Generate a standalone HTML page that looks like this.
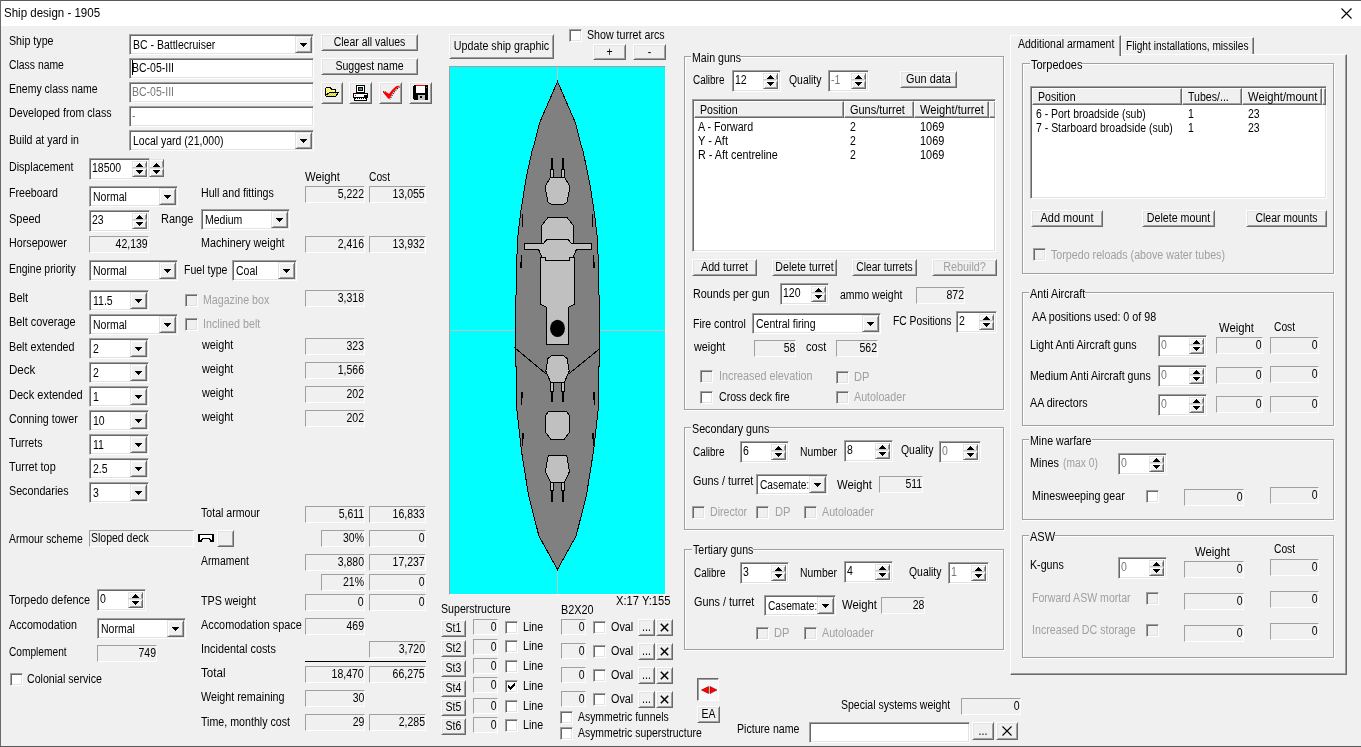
<!DOCTYPE html>
<html><head><meta charset="utf-8"><title>Ship design - 1905</title><style>
html,body{margin:0;padding:0}
body{width:1361px;height:747px;overflow:hidden;background:#f0f0f0;font-family:"Liberation Sans",sans-serif;font-size:12px;line-height:14px;color:#000;position:relative}
div,span{box-sizing:border-box}
#w{position:absolute;left:0;top:0;width:1361px;height:747px;will-change:transform}
.a{position:absolute}
.t{position:absolute;white-space:nowrap;transform:scaleX(.875);transform-origin:0 0;height:14px}
.tr{position:absolute;white-space:nowrap;transform:scaleX(.875);transform-origin:100% 0;height:14px;text-align:right}
.tc{position:absolute;white-space:nowrap;transform:scaleX(.875);transform-origin:50% 0;height:14px;text-align:center;left:-30px;right:-30px}
.g{color:#a0a0a0}
.g2{color:#787878}
.ed{position:absolute;background:#fff;border:1px solid;border-color:#a0a0a0 #fff #fff #a0a0a0;box-shadow:inset 1px 1px 0 #696969,inset -1px -1px 0 #e3e3e3;overflow:hidden}
.fd{position:absolute;border:1px solid;border-color:#a0a0a0 #fff #fff #a0a0a0;overflow:hidden}
.bt{position:absolute;background:#f0f0f0;border:1px solid;border-color:#fff #696969 #696969 #fff;box-shadow:inset 1px 1px 0 #e3e3e3,inset -1px -1px 0 #a0a0a0}
.sb{position:absolute;background:#f0f0f0;border:1px solid;border-color:#e3e3e3 #696969 #696969 #e3e3e3;box-shadow:inset 1px 1px 0 #fff,inset -1px -1px 0 #a0a0a0}
.sb.su{border-bottom-color:#c8c8c8;box-shadow:inset 1px 1px 0 #fff,inset -1px 0 0 #a0a0a0}
.gb{position:absolute;border:1px solid #a0a0a0;box-shadow:1px 1px 0 #fff,inset 1px 1px 0 #fff}
.gt{position:absolute;background:#f0f0f0;height:14px}
.cb{position:absolute;width:13px;height:13px;background:#fff;border:1px solid;border-color:#a0a0a0 #fff #fff #a0a0a0;box-shadow:inset 1px 1px 0 #696969,inset -1px -1px 0 #e3e3e3}
.cb.d{background:#f0f0f0}
.hc{position:absolute;background:#f0f0f0;border:1px solid;border-color:#fff #696969 #696969 #fff;box-shadow:inset -1px -1px 0 #a0a0a0;height:17px;top:0}
svg{position:absolute;overflow:visible}
</style></head><body><div id="w">
<div class="a" style="left:0;top:0;width:1361px;height:26px;background:#fff"></div>
<div class="a" style="left:0;top:0;width:1361px;height:1px;background:#5a5a5a"></div>
<div class="a" style="left:0;top:0;width:1px;height:747px;background:#6a6a6a"></div>
<div class="a" style="left:0;top:746px;width:1361px;height:1px;background:#5a5a5a"></div>
<div class="t" style="left:4px;top:6px;transform:scaleX(.96)">Ship design - 1905</div>
<svg width="11" height="11" style="left:1341px;top:8px"><path d="M0.5 0.5L10.5 10.5M10.5 0.5L0.5 10.5" stroke="#000" stroke-width="1.1" fill="none"/></svg>
<div class="t " style="left:9px;top:34px;transform:scaleX(0.8894)">Ship type</div>
<div class="t " style="left:9px;top:58px;transform:scaleX(0.8665)">Class name</div>
<div class="t " style="left:9px;top:82px;transform:scaleX(0.875)">Enemy class name</div>
<div class="t " style="left:9px;top:106px;transform:scaleX(0.8892)">Developed from class</div>
<div class="t " style="left:9px;top:133px;transform:scaleX(0.8806)">Build at yard in</div>
<div class="ed" style="left:129px;top:34px;width:185px;height:21px"><div class="t " style="left:3px;top:3px;width:184.0px;overflow:hidden">BC - Battlecruiser</div><div class="sb" style="left:165px;top:1px;width:17px;height:17px"><svg width="7" height="4" style="left:4px;top:6px" shape-rendering="crispEdges"><path d="M0 0h7v1h-7zM1 1h5v1h-5zM2 2h3v1h-3zM3 3h1v1h-1z" fill="#000"/></svg></div></div>
<div class="ed" style="left:129px;top:58px;width:185px;height:21px"><div class="a" style="left:2px;top:1px;width:1px;height:15px;background:#000"></div><div class="t " style="left:2px;top:2px">BC-05-III</div></div>
<div class="ed" style="left:129px;top:82px;width:185px;height:21px"><div class="t g2" style="left:2px;top:2px">BC-05-III</div></div>
<div class="ed" style="left:129px;top:106px;width:185px;height:21px"><div class="t g2" style="left:2px;top:2px">-</div></div>
<div class="ed" style="left:129px;top:130px;width:185px;height:21px"><div class="t " style="left:3px;top:3px;width:184.0px;overflow:hidden">Local yard (21,000)</div><div class="sb" style="left:165px;top:1px;width:17px;height:17px"><svg width="7" height="4" style="left:4px;top:6px" shape-rendering="crispEdges"><path d="M0 0h7v1h-7zM1 1h5v1h-5zM2 2h3v1h-3zM3 3h1v1h-1z" fill="#000"/></svg></div></div>
<div class="bt" style="left:321px;top:34px;width:97px;height:17px"><div class="tc " style="top:0px;transform:scaleX(0.8716)">Clear all values</div></div>
<div class="bt" style="left:321px;top:58px;width:97px;height:17px"><div class="tc " style="top:0px;transform:scaleX(0.8813)">Suggest name</div></div>
<div class="bt" style="left:321px;top:82px;width:22px;height:22px"><svg width="14" height="10" style="left:3px;top:4px" shape-rendering="crispEdges"><defs><pattern id="dy" width="2" height="2" patternUnits="userSpaceOnUse"><rect width="2" height="2" fill="#ffff00"/><rect width="1" height="1" fill="#ffffff"/><rect x="1" y="1" width="1" height="1" fill="#ffffff"/></pattern><pattern id="dg" width="2" height="2" patternUnits="userSpaceOnUse"><rect width="2" height="2" fill="#ffff00"/><rect width="1" height="1" fill="#c0c0c0"/><rect x="1" y="1" width="1" height="1" fill="#c0c0c0"/></pattern></defs><polygon points="0.5,8.5 0.5,1.5 1.5,0.5 5.5,0.5 6.5,2.5 10.5,2.5 10.5,5.5 4.5,5.5 1.5,8.5" fill="url(#dy)" stroke="#000" stroke-width="1"/><polygon points="4.5,5.5 13.5,5.5 10.5,9.5 1.5,9.5 0.5,8.5" fill="url(#dg)" stroke="#000" stroke-width="1"/></svg></div>
<div class="bt" style="left:349px;top:82px;width:23px;height:22px"><svg width="15" height="16" style="left:3px;top:2px" shape-rendering="crispEdges"><rect x="3.5" y="0.5" width="8" height="7" fill="#fff" stroke="#000"/><rect x="5.5" y="2.5" width="4" height="3" fill="#00c000" stroke="#000"/><rect x="6" y="3" width="1" height="1" fill="#ff00ff"/><rect x="8" y="3" width="1" height="1" fill="#ff00ff"/><rect x="8" y="4" width="1" height="1" fill="#00ffff"/><rect x="0.5" y="8.5" width="14" height="4" fill="#fff" stroke="#000"/><rect x="0" y="8" width="15" height="1" fill="#000"/><rect x="2" y="10" width="1" height="1" fill="#f00"/><rect x="11.5" y="10.5" width="3" height="1" fill="#fff" stroke="#000"/><rect x="1" y="13" width="13" height="3" fill="#fff"/><path d="M1 13h2M4 13h1M6 13h1M8 13h1M10 13h1M12 13h2M1 14h1M13 14h1" stroke="#000" transform="translate(0,.5)"/><rect x="1" y="15" width="13" height="1" fill="#000"/></svg></div>
<div class="bt" style="left:379px;top:82px;width:23px;height:22px"><svg width="22" height="20" style="left:-1px;top:-1px"><path d="M20.6 4.9Q14.6 9 11.1 17.2" stroke="#000" stroke-width="1.1" stroke-dasharray="1.1 1.1" fill="none"/><path d="M4.2 9.6h2.6" stroke="#000" stroke-width="1" stroke-dasharray="1 1" fill="none"/><path d="M4.2 10H6.8L10.2 11.8Q12.6 7.6 17 4.2L20.2 3.6V4.5Q14 8.6 10.6 16.8H9.4L4.2 10.8z" fill="#f00"/></svg></div>
<div class="bt" style="left:409px;top:82px;width:23px;height:22px"><svg width="15" height="15" style="left:3px;top:2px" shape-rendering="crispEdges"><path d="M1 0h13l1 1v13l-1 1h-13l-1-1v-13z" fill="#000"/><rect x="3" y="0" width="9" height="8" fill="#fff"/><rect x="3" y="0" width="9" height="1" fill="#f00"/><rect x="5" y="10" width="7" height="5" fill="#c0c0c0"/><rect x="7" y="11" width="2" height="2" fill="#000"/><rect x="13" y="2" width="1" height="1" fill="#808080"/></svg></div>
<div class="t " style="left:9px;top:160px;transform:scaleX(0.8859)">Displacement</div>
<div class="ed" style="left:89px;top:158px;width:61px;height:22px"><div class="t " style="left:2px;top:2px">18500</div><div class="sb su" style="left:42px;top:2px;width:15px;height:7px"><svg width="7" height="4" style="left:3px;top:1px" shape-rendering="crispEdges"><path d="M3 0h1v1h-1zM2 1h3v1h-3zM1 2h5v1h-5zM0 3h7v1h-7z" fill="#000"/></svg></div><div class="sb" style="left:42px;top:9px;width:15px;height:9px"><svg width="7" height="4" style="left:3px;top:1px" shape-rendering="crispEdges"><path d="M0 0h7v1h-7zM1 1h5v1h-5zM2 2h3v1h-3zM3 3h1v1h-1z" fill="#000"/></svg></div></div>
<div class="a" style="left:149px;top:159px;width:15px;height:18px"><div class="sb su" style="left:0px;top:0px;width:15px;height:9px"><svg width="7" height="4" style="left:3px;top:3px" shape-rendering="crispEdges"><path d="M3 0h1v1h-1zM2 1h3v1h-3zM1 2h5v1h-5zM0 3h7v1h-7z" fill="#000"/></svg></div><div class="sb" style="left:0px;top:9px;width:15px;height:9px"><svg width="7" height="4" style="left:3px;top:1px" shape-rendering="crispEdges"><path d="M0 0h7v1h-7zM1 1h5v1h-5zM2 2h3v1h-3zM3 3h1v1h-1z" fill="#000"/></svg></div></div>
<div class="t " style="left:305px;top:170px;transform:scaleX(0.9426)">Weight</div>
<div class="t " style="left:369px;top:170px;transform:scaleX(0.8552)">Cost</div>
<div class="t " style="left:9px;top:186px;transform:scaleX(0.8851)">Freeboard</div>
<div class="ed" style="left:89px;top:186px;width:89px;height:21px"><div class="t " style="left:3px;top:3px;width:74.3px;overflow:hidden">Normal</div><div class="sb" style="left:69px;top:1px;width:17px;height:17px"><svg width="7" height="4" style="left:4px;top:6px" shape-rendering="crispEdges"><path d="M0 0h7v1h-7zM1 1h5v1h-5zM2 2h3v1h-3zM3 3h1v1h-1z" fill="#000"/></svg></div></div>
<div class="t " style="left:201px;top:186px;transform:scaleX(0.8874)">Hull and fittings</div>
<div class="fd" style="left:305px;top:186px;width:60px;height:17px"><div class="tr " style="right:0px;top:0px">5,222</div></div>
<div class="fd" style="left:369px;top:186px;width:57px;height:17px"><div class="tr " style="right:0px;top:0px">13,055</div></div>
<div class="t " style="left:9px;top:212px;transform:scaleX(0.9136)">Speed</div>
<div class="ed" style="left:89px;top:210px;width:61px;height:22px"><div class="t " style="left:2px;top:2px">23</div><div class="sb su" style="left:42px;top:2px;width:15px;height:7px"><svg width="7" height="4" style="left:3px;top:1px" shape-rendering="crispEdges"><path d="M3 0h1v1h-1zM2 1h3v1h-3zM1 2h5v1h-5zM0 3h7v1h-7z" fill="#000"/></svg></div><div class="sb" style="left:42px;top:9px;width:15px;height:9px"><svg width="7" height="4" style="left:3px;top:1px" shape-rendering="crispEdges"><path d="M0 0h7v1h-7zM1 1h5v1h-5zM2 2h3v1h-3zM3 3h1v1h-1z" fill="#000"/></svg></div></div>
<div class="t " style="left:161px;top:212px;transform:scaleX(0.9163)">Range</div>
<div class="ed" style="left:201px;top:209px;width:89px;height:21px"><div class="t " style="left:3px;top:3px;width:74.3px;overflow:hidden">Medium</div><div class="sb" style="left:69px;top:1px;width:17px;height:17px"><svg width="7" height="4" style="left:4px;top:6px" shape-rendering="crispEdges"><path d="M0 0h7v1h-7zM1 1h5v1h-5zM2 2h3v1h-3zM3 3h1v1h-1z" fill="#000"/></svg></div></div>
<div class="t " style="left:9px;top:236px;transform:scaleX(0.8935)">Horsepower</div>
<div class="fd" style="left:89px;top:236px;width:60px;height:17px"><div class="tr " style="right:0px;top:0px">42,139</div></div>
<div class="t " style="left:201px;top:236px;transform:scaleX(0.8953)">Machinery weight</div>
<div class="fd" style="left:305px;top:236px;width:60px;height:17px"><div class="tr " style="right:0px;top:0px">2,416</div></div>
<div class="fd" style="left:369px;top:236px;width:57px;height:17px"><div class="tr " style="right:0px;top:0px">13,932</div></div>
<div class="t " style="left:9px;top:262px;transform:scaleX(0.8683)">Engine priority</div>
<div class="ed" style="left:89px;top:260px;width:89px;height:21px"><div class="t " style="left:3px;top:3px;width:74.3px;overflow:hidden">Normal</div><div class="sb" style="left:69px;top:1px;width:17px;height:17px"><svg width="7" height="4" style="left:4px;top:6px" shape-rendering="crispEdges"><path d="M0 0h7v1h-7zM1 1h5v1h-5zM2 2h3v1h-3zM3 3h1v1h-1z" fill="#000"/></svg></div></div>
<div class="t " style="left:184px;top:263px;transform:scaleX(0.8793)">Fuel type</div>
<div class="ed" style="left:232px;top:260px;width:65px;height:21px"><div class="t " style="left:3px;top:3px;width:46.9px;overflow:hidden">Coal</div><div class="sb" style="left:45px;top:1px;width:17px;height:17px"><svg width="7" height="4" style="left:4px;top:6px" shape-rendering="crispEdges"><path d="M0 0h7v1h-7zM1 1h5v1h-5zM2 2h3v1h-3zM3 3h1v1h-1z" fill="#000"/></svg></div></div>
<div class="t " style="left:9px;top:291px;transform:scaleX(0.9237)">Belt</div>
<div class="ed" style="left:89px;top:290px;width:60px;height:21px"><div class="t " style="left:3px;top:3px;width:41.1px;overflow:hidden">11.5</div><div class="sb" style="left:40px;top:1px;width:17px;height:17px"><svg width="7" height="4" style="left:4px;top:6px" shape-rendering="crispEdges"><path d="M0 0h7v1h-7zM1 1h5v1h-5zM2 2h3v1h-3zM3 3h1v1h-1z" fill="#000"/></svg></div></div>
<div class="t " style="left:9px;top:315px;transform:scaleX(0.9076)">Belt coverage</div>
<div class="ed" style="left:89px;top:314px;width:89px;height:21px"><div class="t " style="left:3px;top:3px;width:74.3px;overflow:hidden">Normal</div><div class="sb" style="left:69px;top:1px;width:17px;height:17px"><svg width="7" height="4" style="left:4px;top:6px" shape-rendering="crispEdges"><path d="M0 0h7v1h-7zM1 1h5v1h-5zM2 2h3v1h-3zM3 3h1v1h-1z" fill="#000"/></svg></div></div>
<div class="t " style="left:9px;top:340px;transform:scaleX(0.8925)">Belt extended</div>
<div class="ed" style="left:89px;top:338px;width:60px;height:21px"><div class="t " style="left:3px;top:3px;width:41.1px;overflow:hidden">2</div><div class="sb" style="left:40px;top:1px;width:17px;height:17px"><svg width="7" height="4" style="left:4px;top:6px" shape-rendering="crispEdges"><path d="M0 0h7v1h-7zM1 1h5v1h-5zM2 2h3v1h-3zM3 3h1v1h-1z" fill="#000"/></svg></div></div>
<div class="t " style="left:9px;top:363px;transform:scaleX(0.9657)">Deck</div>
<div class="ed" style="left:89px;top:362px;width:60px;height:21px"><div class="t " style="left:3px;top:3px;width:41.1px;overflow:hidden">2</div><div class="sb" style="left:40px;top:1px;width:17px;height:17px"><svg width="7" height="4" style="left:4px;top:6px" shape-rendering="crispEdges"><path d="M0 0h7v1h-7zM1 1h5v1h-5zM2 2h3v1h-3zM3 3h1v1h-1z" fill="#000"/></svg></div></div>
<div class="t " style="left:9px;top:388px;transform:scaleX(0.9207)">Deck extended</div>
<div class="ed" style="left:89px;top:386px;width:60px;height:21px"><div class="t " style="left:3px;top:3px;width:41.1px;overflow:hidden">1</div><div class="sb" style="left:40px;top:1px;width:17px;height:17px"><svg width="7" height="4" style="left:4px;top:6px" shape-rendering="crispEdges"><path d="M0 0h7v1h-7zM1 1h5v1h-5zM2 2h3v1h-3zM3 3h1v1h-1z" fill="#000"/></svg></div></div>
<div class="t " style="left:9px;top:412px;transform:scaleX(0.8892)">Conning tower</div>
<div class="ed" style="left:89px;top:410px;width:60px;height:21px"><div class="t " style="left:3px;top:3px;width:41.1px;overflow:hidden">10</div><div class="sb" style="left:40px;top:1px;width:17px;height:17px"><svg width="7" height="4" style="left:4px;top:6px" shape-rendering="crispEdges"><path d="M0 0h7v1h-7zM1 1h5v1h-5zM2 2h3v1h-3zM3 3h1v1h-1z" fill="#000"/></svg></div></div>
<div class="t " style="left:9px;top:436px;transform:scaleX(0.8919)">Turrets</div>
<div class="ed" style="left:89px;top:434px;width:60px;height:21px"><div class="t " style="left:3px;top:3px;width:41.1px;overflow:hidden">11</div><div class="sb" style="left:40px;top:1px;width:17px;height:17px"><svg width="7" height="4" style="left:4px;top:6px" shape-rendering="crispEdges"><path d="M0 0h7v1h-7zM1 1h5v1h-5zM2 2h3v1h-3zM3 3h1v1h-1z" fill="#000"/></svg></div></div>
<div class="t " style="left:9px;top:460px;transform:scaleX(0.9055)">Turret top</div>
<div class="ed" style="left:89px;top:458px;width:60px;height:21px"><div class="t " style="left:3px;top:3px;width:41.1px;overflow:hidden">2.5</div><div class="sb" style="left:40px;top:1px;width:17px;height:17px"><svg width="7" height="4" style="left:4px;top:6px" shape-rendering="crispEdges"><path d="M0 0h7v1h-7zM1 1h5v1h-5zM2 2h3v1h-3zM3 3h1v1h-1z" fill="#000"/></svg></div></div>
<div class="t " style="left:9px;top:484px;transform:scaleX(0.8934)">Secondaries</div>
<div class="ed" style="left:89px;top:482px;width:60px;height:21px"><div class="t " style="left:3px;top:3px;width:41.1px;overflow:hidden">3</div><div class="sb" style="left:40px;top:1px;width:17px;height:17px"><svg width="7" height="4" style="left:4px;top:6px" shape-rendering="crispEdges"><path d="M0 0h7v1h-7zM1 1h5v1h-5zM2 2h3v1h-3zM3 3h1v1h-1z" fill="#000"/></svg></div></div>
<div class="cb d" style="left:185px;top:294px"></div>
<div class="t g" style="left:203px;top:293px;transform:scaleX(0.8861)">Magazine box</div>
<div class="cb d" style="left:185px;top:318px"></div>
<div class="t g" style="left:203px;top:317px;transform:scaleX(0.8947)">Inclined belt</div>
<div class="fd" style="left:305px;top:290px;width:60px;height:17px"><div class="tr " style="right:0px;top:0px">3,318</div></div>
<div class="t " style="left:202px;top:338px;transform:scaleX(0.9024)">weight</div>
<div class="fd" style="left:305px;top:338px;width:60px;height:17px"><div class="tr " style="right:0px;top:0px">323</div></div>
<div class="t " style="left:202px;top:362px;transform:scaleX(0.9024)">weight</div>
<div class="fd" style="left:305px;top:362px;width:60px;height:17px"><div class="tr " style="right:0px;top:0px">1,566</div></div>
<div class="t " style="left:202px;top:386px;transform:scaleX(0.9024)">weight</div>
<div class="fd" style="left:305px;top:386px;width:60px;height:17px"><div class="tr " style="right:0px;top:0px">202</div></div>
<div class="t " style="left:202px;top:410px;transform:scaleX(0.9024)">weight</div>
<div class="fd" style="left:305px;top:410px;width:60px;height:17px"><div class="tr " style="right:0px;top:0px">202</div></div>
<div class="t " style="left:201px;top:506px;transform:scaleX(0.8832)">Total armour</div>
<div class="fd" style="left:305px;top:506px;width:60px;height:17px"><div class="tr " style="right:0px;top:0px">5,611</div></div>
<div class="fd" style="left:369px;top:506px;width:57px;height:17px"><div class="tr " style="right:0px;top:0px">16,833</div></div>
<div class="t " style="left:9px;top:532px;transform:scaleX(0.8702)">Armour scheme</div>
<div class="fd" style="left:89px;top:530px;width:105px;height:17px"><div class="t " style="left:1px;top:0px">Sloped deck</div></div>
<svg width="16" height="8" style="left:198px;top:534px" shape-rendering="crispEdges"><rect x="0" y="0" width="16" height="1" fill="#000"/><rect x="0" y="1" width="2" height="1" fill="#000"/><rect x="2" y="1" width="12" height="1" fill="#fff"/><rect x="14" y="1" width="2" height="1" fill="#000"/><rect x="0" y="2" width="2" height="1" fill="#000"/><rect x="2" y="2" width="12" height="1" fill="#fff"/><rect x="14" y="2" width="2" height="1" fill="#000"/><rect x="0" y="3" width="2" height="1" fill="#000"/><rect x="2" y="3" width="12" height="1" fill="#fff"/><rect x="14" y="3" width="2" height="1" fill="#000"/><rect x="0" y="4" width="2" height="1" fill="#000"/><rect x="2" y="4" width="2" height="1" fill="#fff"/><rect x="4" y="4" width="8" height="1" fill="#000"/><rect x="12" y="4" width="2" height="1" fill="#fff"/><rect x="14" y="4" width="2" height="1" fill="#000"/><rect x="0" y="5" width="2" height="1" fill="#000"/><rect x="2" y="5" width="1" height="1" fill="#fff"/><rect x="3" y="5" width="2" height="1" fill="#000"/><rect x="11" y="5" width="2" height="1" fill="#000"/><rect x="13" y="5" width="1" height="1" fill="#fff"/><rect x="14" y="5" width="2" height="1" fill="#000"/><rect x="0" y="6" width="4" height="1" fill="#000"/><rect x="12" y="6" width="4" height="1" fill="#000"/><rect x="0" y="7" width="4" height="1" fill="#000"/><rect x="12" y="7" width="4" height="1" fill="#000"/></svg>
<div class="bt" style="left:217px;top:530px;width:17px;height:17px"><div class="tc " style="top:0px"></div></div>
<div class="fd" style="left:321px;top:530px;width:44px;height:17px"><div class="tr " style="right:0px;top:0px">30%</div></div>
<div class="fd" style="left:369px;top:530px;width:57px;height:17px"><div class="tr " style="right:0px;top:0px">0</div></div>
<div class="t " style="left:201px;top:554px;transform:scaleX(0.8636)">Armament</div>
<div class="fd" style="left:305px;top:554px;width:60px;height:17px"><div class="tr " style="right:0px;top:0px">3,880</div></div>
<div class="fd" style="left:369px;top:554px;width:57px;height:17px"><div class="tr " style="right:0px;top:0px">17,237</div></div>
<div class="fd" style="left:321px;top:574px;width:44px;height:17px"><div class="tr " style="right:0px;top:0px">21%</div></div>
<div class="fd" style="left:369px;top:574px;width:57px;height:17px"><div class="tr " style="right:0px;top:0px">0</div></div>
<div class="t " style="left:9px;top:593px;transform:scaleX(0.906)">Torpedo defence</div>
<div class="ed" style="left:97px;top:589px;width:49px;height:22px"><div class="t " style="left:2px;top:2px">0</div><div class="sb su" style="left:30px;top:2px;width:15px;height:7px"><svg width="7" height="4" style="left:3px;top:1px" shape-rendering="crispEdges"><path d="M3 0h1v1h-1zM2 1h3v1h-3zM1 2h5v1h-5zM0 3h7v1h-7z" fill="#000"/></svg></div><div class="sb" style="left:30px;top:9px;width:15px;height:9px"><svg width="7" height="4" style="left:3px;top:1px" shape-rendering="crispEdges"><path d="M0 0h7v1h-7zM1 1h5v1h-5zM2 2h3v1h-3zM3 3h1v1h-1z" fill="#000"/></svg></div></div>
<div class="t " style="left:201px;top:594px;transform:scaleX(0.8947)">TPS weight</div>
<div class="fd" style="left:305px;top:594px;width:60px;height:17px"><div class="tr " style="right:0px;top:0px">0</div></div>
<div class="fd" style="left:369px;top:594px;width:57px;height:17px"><div class="tr " style="right:0px;top:0px">0</div></div>
<div class="t " style="left:9px;top:618px;transform:scaleX(0.8942)">Accomodation</div>
<div class="ed" style="left:97px;top:618px;width:89px;height:21px"><div class="t " style="left:3px;top:3px;width:74.3px;overflow:hidden">Normal</div><div class="sb" style="left:69px;top:1px;width:17px;height:17px"><svg width="7" height="4" style="left:4px;top:6px" shape-rendering="crispEdges"><path d="M0 0h7v1h-7zM1 1h5v1h-5zM2 2h3v1h-3zM3 3h1v1h-1z" fill="#000"/></svg></div></div>
<div class="t " style="left:201px;top:618px;transform:scaleX(0.9049)">Accomodation space</div>
<div class="fd" style="left:305px;top:618px;width:60px;height:17px"><div class="tr " style="right:0px;top:0px">469</div></div>
<div class="t " style="left:9px;top:645px;transform:scaleX(0.8467)">Complement</div>
<div class="fd" style="left:97px;top:645px;width:60px;height:17px"><div class="tr " style="right:0px;top:0px">749</div></div>
<div class="t " style="left:201px;top:642px;transform:scaleX(0.9044)">Incidental costs</div>
<div class="fd" style="left:369px;top:641px;width:57px;height:17px"><div class="tr " style="right:0px;top:0px">3,720</div></div>
<div class="a" style="left:305px;top:661px;width:121px;height:1px;background:#000"></div>
<div class="t " style="left:201px;top:666px;transform:scaleX(0.97)">Total</div>
<div class="fd" style="left:305px;top:666px;width:60px;height:17px"><div class="tr " style="right:0px;top:0px">18,470</div></div>
<div class="fd" style="left:369px;top:666px;width:57px;height:17px"><div class="tr " style="right:0px;top:0px">66,275</div></div>
<div class="cb" style="left:10px;top:673px"></div>
<div class="t " style="left:27px;top:672px;transform:scaleX(0.8843)">Colonial service</div>
<div class="t " style="left:201px;top:690px;transform:scaleX(0.8963)">Weight remaining</div>
<div class="fd" style="left:305px;top:690px;width:60px;height:17px"><div class="tr " style="right:0px;top:0px">30</div></div>
<div class="t " style="left:201px;top:715px;transform:scaleX(0.8878)">Time, monthly cost</div>
<div class="fd" style="left:305px;top:714px;width:60px;height:17px"><div class="tr " style="right:0px;top:0px">29</div></div>
<div class="fd" style="left:369px;top:714px;width:57px;height:17px"><div class="tr " style="right:0px;top:0px">2,285</div></div>
<div class="bt" style="left:449px;top:34px;width:105px;height:25px"><div class="tc " style="top:4px;transform:scaleX(0.8929)">Update ship graphic</div></div>
<div class="cb" style="left:569px;top:29px"></div>
<div class="t " style="left:587px;top:28px;transform:scaleX(0.8882)">Show turret arcs</div>
<div class="bt" style="left:593px;top:44px;width:33px;height:16px"><div class="tc " style="top:0px">+</div></div>
<div class="bt" style="left:633px;top:44px;width:33px;height:16px"><div class="tc " style="top:0px">-</div></div>
<div class="a" style="left:449px;top:66px;width:217px;height:529px;border:1px solid;border-color:#a0a0a0 #fff #fff #a0a0a0"></div><svg width="215" height="527" style="left:450px;top:67px;background:#00ffff;overflow:hidden" shape-rendering="crispEdges"><rect x="107" y="0" width="1" height="527" fill="#c0c0c0"/><rect x="0" y="263" width="215" height="1" fill="#c0c0c0"/><polygon points="107.5,14.5 125.5,56.0 130.7,77.0 132.7,83.0 136.9,102.0 139.7,116.0 144.5,146.6 147.9,176.0 147.9,187.0 148.8,187.5 148.8,228.0 149.7,228.5 149.7,298.7 148.8,299.5 148.7,338.0 143.7,383.0 136.5,428.0 126.1,469.0 107.5,502.5 88.9,469.0 78.5,428.0 71.3,383.0 66.3,338.0 66.2,299.5 65.3,298.7 65.3,228.5 66.2,228.0 66.2,187.5 67.1,187.0 67.1,176.0 70.5,146.6 75.3,116.0 78.1,102.0 82.3,83.0 84.3,77.0 89.5,56.0" fill="#808080" stroke="#000" stroke-width="1"/><path d="M64 280.2L96.5 307.3M150 281.5L119 306.7" stroke="#000" stroke-width="1" fill="none"/><polygon points="124.5,190.0 124.5,237.0 118.7,240.2 118.7,277.5 96.3,277.5 96.3,240.2 90.5,237.0 90.5,190.0" fill="#c0c0c0" stroke="#000" stroke-width="1"/><polygon points="117.0,150.6 123.5,158.6 123.5,179.0 91.5,179.0 91.5,158.6 98.0,150.6" fill="#c0c0c0" stroke="#000" stroke-width="1"/><polygon points="117.9,172.5 121.7,176.5 141.0,176.5 141.0,182.3 126.5,182.3 123.1,190.0 119.6,190.0 119.6,193.0 95.4,193.0 95.4,190.0 91.9,190.0 88.5,182.3 74.0,182.3 74.0,176.5 93.3,176.5 97.1,172.5" fill="#c0c0c0" stroke="#000" stroke-width="1"/><ellipse cx="107.5" cy="261.4" rx="7.4" ry="8.6" fill="#000" shape-rendering="auto"/><rect x="101.1" y="91.2" width="1.6" height="11.0" fill="#000"/><rect x="100.6" y="102.2" width="2.6" height="8.8" fill="#c0c0c0" stroke="#000" stroke-width="1"/><rect x="112.1" y="91.2" width="1.6" height="11.0" fill="#000"/><rect x="111.6" y="102.2" width="2.6" height="8.8" fill="#c0c0c0" stroke="#000" stroke-width="1"/><polygon points="114.7,110.6 119.5,118.5 119.5,122.8 116.9,135.4 113.2,137.3 101.8,137.3 98.1,135.4 95.5,122.8 95.5,118.5 100.3,110.6" fill="#c0c0c0" stroke="#000" stroke-width="1"/><rect x="101.1" y="324.6" width="1.6" height="9.9" fill="#000"/><rect x="100.6" y="314.5" width="2.6" height="10.1" fill="#c0c0c0" stroke="#000" stroke-width="1"/><rect x="112.1" y="324.6" width="1.6" height="9.9" fill="#000"/><rect x="111.6" y="314.5" width="2.6" height="10.1" fill="#c0c0c0" stroke="#000" stroke-width="1"/><polygon points="113.2,288.5 117.1,291.4 119.2,304.0 114.7,314.6 114.7,315.0 100.3,315.0 100.3,314.6 95.8,304.0 97.9,291.4 101.8,288.5" fill="#c0c0c0" stroke="#000" stroke-width="1"/><polygon points="117.0,344.7 119.7,349.6 119.7,364.8 114.1,372.5 100.9,372.5 95.3,364.8 95.3,349.6 98.0,344.7" fill="#c0c0c0" stroke="#000" stroke-width="1"/><rect x="101.1" y="423.8" width="1.6" height="10.8" fill="#000"/><rect x="100.6" y="414.8" width="2.6" height="9.0" fill="#c0c0c0" stroke="#000" stroke-width="1"/><rect x="112.1" y="423.8" width="1.6" height="10.8" fill="#000"/><rect x="111.6" y="414.8" width="2.6" height="9.0" fill="#c0c0c0" stroke="#000" stroke-width="1"/><polygon points="116.1,388.4 117.1,390.0 119.5,404.6 114.7,414.5 114.7,415.2 100.3,415.2 100.3,414.5 95.5,404.6 97.9,390.0 98.9,388.4" fill="#c0c0c0" stroke="#000" stroke-width="1"/><rect x="72" y="147" width="1" height="13" fill="#000"/><rect x="142" y="147" width="1" height="13" fill="#000"/><rect x="71" y="188" width="1" height="7" fill="#000"/><rect x="70" y="195" width="2" height="6" fill="#000"/><rect x="143" y="188" width="1" height="7" fill="#000"/><rect x="143" y="195" width="2" height="6" fill="#000"/><rect x="71" y="325" width="2" height="6" fill="#000"/><rect x="71" y="331" width="1" height="7" fill="#000"/><rect x="143" y="325" width="2" height="8" fill="#000"/><rect x="144" y="333" width="1" height="5" fill="#000"/><rect x="72" y="366" width="2" height="6" fill="#000"/><rect x="72" y="372" width="1" height="7" fill="#000"/><rect x="142" y="366" width="2" height="6" fill="#000"/><rect x="143" y="372" width="1" height="7" fill="#000"/></svg>
<div class="t " style="left:616px;top:594px;transform:scaleX(0.9316)">X:17 Y:155</div>
<div class="t " style="left:441px;top:602px;transform:scaleX(0.8843)">Superstructure</div>
<div class="t " style="left:561px;top:603px;transform:scaleX(0.902)">B2X20</div>
<div class="bt" style="left:441px;top:620px;width:25px;height:17px"><div class="tc " style="top:0px">St1</div></div>
<div class="fd" style="left:473px;top:619px;width:25px;height:16px"><div class="tr " style="right:0px;top:0px">0</div></div>
<div class="cb" style="left:505px;top:621px"></div>
<div class="t " style="left:523px;top:620px;transform:scaleX(0.886)">Line</div>
<div class="bt" style="left:441px;top:640px;width:25px;height:17px"><div class="tc " style="top:0px">St2</div></div>
<div class="fd" style="left:473px;top:639px;width:25px;height:16px"><div class="tr " style="right:0px;top:0px">0</div></div>
<div class="cb" style="left:505px;top:640px"></div>
<div class="t " style="left:523px;top:639px;transform:scaleX(0.886)">Line</div>
<div class="bt" style="left:441px;top:660px;width:25px;height:17px"><div class="tc " style="top:0px">St3</div></div>
<div class="fd" style="left:473px;top:658px;width:25px;height:16px"><div class="tr " style="right:0px;top:0px">0</div></div>
<div class="cb" style="left:505px;top:660px"></div>
<div class="t " style="left:523px;top:659px;transform:scaleX(0.886)">Line</div>
<div class="bt" style="left:441px;top:680px;width:25px;height:17px"><div class="tc " style="top:0px">St4</div></div>
<div class="fd" style="left:473px;top:677px;width:25px;height:16px"><div class="tr " style="right:0px;top:0px">0</div></div>
<div class="cb" style="left:505px;top:680px"><svg width="7" height="7" style="left:2px;top:2px" shape-rendering="crispEdges"><path d="M0 2h1v3h-1zM1 3h1v3h-1zM2 4h1v3h-1zM3 3h1v3h-1zM4 2h1v3h-1zM5 1h1v3h-1zM6 0h1v3h-1z" fill="#000"/></svg></div>
<div class="t " style="left:523px;top:679px;transform:scaleX(0.886)">Line</div>
<div class="bt" style="left:441px;top:699px;width:25px;height:17px"><div class="tc " style="top:0px">St5</div></div>
<div class="fd" style="left:473px;top:698px;width:25px;height:16px"><div class="tr " style="right:0px;top:0px">0</div></div>
<div class="cb" style="left:505px;top:700px"></div>
<div class="t " style="left:523px;top:699px;transform:scaleX(0.886)">Line</div>
<div class="bt" style="left:441px;top:718px;width:25px;height:17px"><div class="tc " style="top:0px">St6</div></div>
<div class="fd" style="left:473px;top:717px;width:25px;height:16px"><div class="tr " style="right:0px;top:0px">0</div></div>
<div class="cb" style="left:505px;top:719px"></div>
<div class="t " style="left:523px;top:718px;transform:scaleX(0.886)">Line</div>
<div class="fd" style="left:561px;top:619px;width:25px;height:16px"><div class="tr " style="right:0px;top:0px">0</div></div>
<div class="cb" style="left:593px;top:621px"></div>
<div class="t " style="left:611px;top:620px;transform:scaleX(0.8998)">Oval</div>
<div class="bt" style="left:638px;top:619px;width:17px;height:17px"><div class="tc " style="top:0px">...</div></div>
<div class="bt" style="left:656px;top:619px;width:17px;height:17px"><div class="tc " style="top:0px"></div><svg width="9" height="9" style="left:3px;top:3px"><path d="M0.8 0.8L8.2 8.2M8.2 0.8L0.8 8.2" stroke="#000" stroke-width="1.45" fill="none"/></svg></div>
<div class="fd" style="left:561px;top:643px;width:25px;height:16px"><div class="tr " style="right:0px;top:0px">0</div></div>
<div class="cb" style="left:593px;top:645px"></div>
<div class="t " style="left:611px;top:644px;transform:scaleX(0.8998)">Oval</div>
<div class="bt" style="left:638px;top:643px;width:17px;height:17px"><div class="tc " style="top:0px">...</div></div>
<div class="bt" style="left:656px;top:643px;width:17px;height:17px"><div class="tc " style="top:0px"></div><svg width="9" height="9" style="left:3px;top:3px"><path d="M0.8 0.8L8.2 8.2M8.2 0.8L0.8 8.2" stroke="#000" stroke-width="1.45" fill="none"/></svg></div>
<div class="fd" style="left:561px;top:667px;width:25px;height:16px"><div class="tr " style="right:0px;top:0px">0</div></div>
<div class="cb" style="left:593px;top:669px"></div>
<div class="t " style="left:611px;top:668px;transform:scaleX(0.8998)">Oval</div>
<div class="bt" style="left:638px;top:667px;width:17px;height:17px"><div class="tc " style="top:0px">...</div></div>
<div class="bt" style="left:656px;top:667px;width:17px;height:17px"><div class="tc " style="top:0px"></div><svg width="9" height="9" style="left:3px;top:3px"><path d="M0.8 0.8L8.2 8.2M8.2 0.8L0.8 8.2" stroke="#000" stroke-width="1.45" fill="none"/></svg></div>
<div class="fd" style="left:561px;top:691px;width:25px;height:16px"><div class="tr " style="right:0px;top:0px">0</div></div>
<div class="cb" style="left:593px;top:693px"></div>
<div class="t " style="left:611px;top:692px;transform:scaleX(0.8998)">Oval</div>
<div class="bt" style="left:638px;top:691px;width:17px;height:17px"><div class="tc " style="top:0px">...</div></div>
<div class="bt" style="left:656px;top:691px;width:17px;height:17px"><div class="tc " style="top:0px"></div><svg width="9" height="9" style="left:3px;top:3px"><path d="M0.8 0.8L8.2 8.2M8.2 0.8L0.8 8.2" stroke="#000" stroke-width="1.45" fill="none"/></svg></div>
<div class="cb" style="left:560px;top:711px"></div>
<div class="t " style="left:578px;top:710px;transform:scaleX(0.8663)">Asymmetric funnels</div>
<div class="cb" style="left:560px;top:727px"></div>
<div class="t " style="left:578px;top:726px;transform:scaleX(0.8668)">Asymmetric superstructure</div>
<div class="a" style="left:697px;top:678px;width:22px;height:23px;background:#f8f8f8;border:1px solid;border-color:#696969 #fff #fff #696969;box-shadow:inset 1px 1px 0 #a0a0a0"><svg width="17" height="9" style="left:3px;top:7px"><path d="M0.5 4L7.5 0.5V7.5zM16 4L9 0.5V7.5z" fill="#f00" stroke="#800000" stroke-width=".6"/></svg></div>
<div class="bt" style="left:697px;top:706px;width:23px;height:17px"><div class="tc " style="top:0px">EA</div></div>
<div class="gb" style="left:684px;top:56px;width:320px;height:354px"></div>
<div class="gt" style="left:691px;top:51px;width:50.1px"></div>
<div class="t" style="left:692px;top:51px;transform:scaleX(0.8869)">Main guns</div>
<div class="t " style="left:693px;top:73px;transform:scaleX(0.826)">Calibre</div>
<div class="ed" style="left:732px;top:70px;width:49px;height:22px"><div class="t " style="left:2px;top:2px">12</div><div class="sb su" style="left:30px;top:2px;width:15px;height:7px"><svg width="7" height="4" style="left:3px;top:1px" shape-rendering="crispEdges"><path d="M3 0h1v1h-1zM2 1h3v1h-3zM1 2h5v1h-5zM0 3h7v1h-7z" fill="#000"/></svg></div><div class="sb" style="left:30px;top:9px;width:15px;height:9px"><svg width="7" height="4" style="left:3px;top:1px" shape-rendering="crispEdges"><path d="M0 0h7v1h-7zM1 1h5v1h-5zM2 2h3v1h-3zM3 3h1v1h-1z" fill="#000"/></svg></div></div>
<div class="t " style="left:789px;top:73px;transform:scaleX(0.8675)">Quality</div>
<div class="ed" style="left:828px;top:70px;width:41px;height:22px"><div class="t g2" style="left:2px;top:2px">-1</div><div class="sb su" style="left:22px;top:2px;width:15px;height:7px"><svg width="7" height="4" style="left:3px;top:1px" shape-rendering="crispEdges"><path d="M3 0h1v1h-1zM2 1h3v1h-3zM1 2h5v1h-5zM0 3h7v1h-7z" fill="#000"/></svg></div><div class="sb" style="left:22px;top:9px;width:15px;height:9px"><svg width="7" height="4" style="left:3px;top:1px" shape-rendering="crispEdges"><path d="M0 0h7v1h-7zM1 1h5v1h-5zM2 2h3v1h-3zM3 3h1v1h-1z" fill="#000"/></svg></div></div>
<div class="bt" style="left:900px;top:71px;width:57px;height:17px"><div class="tc " style="top:0px;transform:scaleX(0.9074)">Gun data</div></div>
<div class="ed" style="left:692px;top:99px;width:304px;height:153px"><div class="hc" style="left:1px;top:1px;width:150px"><div class="t" style="left:5px;top:1px;transform:scaleX(0.8808)">Position</div></div><div class="hc" style="left:151px;top:1px;width:70px"><div class="t" style="left:5px;top:1px;transform:scaleX(0.913)">Guns/turret</div></div><div class="hc" style="left:221px;top:1px;width:75px"><div class="t" style="left:5px;top:1px;transform:scaleX(0.9317)">Weight/turret</div></div><div class="hc" style="left:296px;top:1px;width:7px"></div><div class="t" style="left:5px;top:20px;transform:scaleX(0.8885)">A - Forward</div><div class="t" style="left:157px;top:20px">2</div><div class="t" style="left:227px;top:20px;transform:scaleX(0.9103)">1069</div><div class="t" style="left:5px;top:34px;transform:scaleX(0.9241)">Y - Aft</div><div class="t" style="left:157px;top:34px">2</div><div class="t" style="left:227px;top:34px;transform:scaleX(0.9103)">1069</div><div class="t" style="left:5px;top:48px;transform:scaleX(0.8996)">R - Aft centreline</div><div class="t" style="left:157px;top:48px">2</div><div class="t" style="left:227px;top:48px;transform:scaleX(0.9103)">1069</div></div>
<div class="bt" style="left:692px;top:259px;width:65px;height:17px"><div class="tc " style="top:0px;transform:scaleX(0.8919)">Add turret</div></div>
<div class="bt" style="left:772px;top:259px;width:65px;height:17px"><div class="tc " style="top:0px;transform:scaleX(0.8829)">Delete turret</div></div>
<div class="bt" style="left:852px;top:259px;width:65px;height:17px"><div class="tc " style="top:0px;transform:scaleX(0.8558)">Clear turrets</div></div>
<div class="bt" style="left:932px;top:259px;width:65px;height:17px"><div class="tc g" style="top:0px;transform:scaleX(0.8994)">Rebuild?</div></div>
<div class="t " style="left:693px;top:287px;transform:scaleX(0.897)">Rounds per gun</div>
<div class="ed" style="left:780px;top:283px;width:49px;height:22px"><div class="t " style="left:2px;top:2px">120</div><div class="sb su" style="left:30px;top:2px;width:15px;height:7px"><svg width="7" height="4" style="left:3px;top:1px" shape-rendering="crispEdges"><path d="M3 0h1v1h-1zM2 1h3v1h-3zM1 2h5v1h-5zM0 3h7v1h-7z" fill="#000"/></svg></div><div class="sb" style="left:30px;top:9px;width:15px;height:9px"><svg width="7" height="4" style="left:3px;top:1px" shape-rendering="crispEdges"><path d="M0 0h7v1h-7zM1 1h5v1h-5zM2 2h3v1h-3zM3 3h1v1h-1z" fill="#000"/></svg></div></div>
<div class="t " style="left:840px;top:288px;transform:scaleX(0.8744)">ammo weight</div>
<div class="fd" style="left:916px;top:287px;width:49px;height:17px"><div class="tr " style="right:0px;top:0px">872</div></div>
<div class="t " style="left:693px;top:317px;transform:scaleX(0.8797)">Fire control</div>
<div class="ed" style="left:752px;top:313px;width:129px;height:21px"><div class="t " style="left:3px;top:3px;width:120.0px;overflow:hidden">Central firing</div><div class="sb" style="left:109px;top:1px;width:17px;height:17px"><svg width="7" height="4" style="left:4px;top:6px" shape-rendering="crispEdges"><path d="M0 0h7v1h-7zM1 1h5v1h-5zM2 2h3v1h-3zM3 3h1v1h-1z" fill="#000"/></svg></div></div>
<div class="t " style="left:893px;top:314px;transform:scaleX(0.86)">FC Positions</div>
<div class="ed" style="left:956px;top:311px;width:41px;height:22px"><div class="t " style="left:2px;top:2px">2</div><div class="sb su" style="left:22px;top:2px;width:15px;height:7px"><svg width="7" height="4" style="left:3px;top:1px" shape-rendering="crispEdges"><path d="M3 0h1v1h-1zM2 1h3v1h-3zM1 2h5v1h-5zM0 3h7v1h-7z" fill="#000"/></svg></div><div class="sb" style="left:22px;top:9px;width:15px;height:9px"><svg width="7" height="4" style="left:3px;top:1px" shape-rendering="crispEdges"><path d="M0 0h7v1h-7zM1 1h5v1h-5zM2 2h3v1h-3zM3 3h1v1h-1z" fill="#000"/></svg></div></div>
<div class="t " style="left:694px;top:340px;transform:scaleX(0.9024)">weight</div>
<div class="fd" style="left:754px;top:340px;width:42px;height:17px"><div class="tr " style="right:0px;top:0px">58</div></div>
<div class="t " style="left:806px;top:340px;transform:scaleX(0.9179)">cost</div>
<div class="fd" style="left:836px;top:340px;width:42px;height:17px"><div class="tr " style="right:0px;top:0px">562</div></div>
<div class="cb d" style="left:700px;top:370px"></div>
<div class="t g" style="left:719px;top:369px;transform:scaleX(0.8994)">Increased elevation</div>
<div class="cb d" style="left:836px;top:371px"></div>
<div class="t g" style="left:854px;top:370px;transform:scaleX(0.9238)">DP</div>
<div class="cb" style="left:700px;top:391px"></div>
<div class="t " style="left:719px;top:390px;transform:scaleX(0.8823)">Cross deck fire</div>
<div class="cb d" style="left:836px;top:391px"></div>
<div class="t g" style="left:854px;top:390px;transform:scaleX(0.8925)">Autoloader</div>
<div class="gb" style="left:684px;top:427px;width:320px;height:103px"></div>
<div class="gt" style="left:691px;top:422px;width:78.3px"></div>
<div class="t" style="left:692px;top:422px;transform:scaleX(0.8913)">Secondary guns</div>
<div class="t " style="left:693px;top:445px;transform:scaleX(0.826)">Calibre</div>
<div class="ed" style="left:740px;top:441px;width:49px;height:22px"><div class="t " style="left:2px;top:2px">6</div><div class="sb su" style="left:30px;top:2px;width:15px;height:7px"><svg width="7" height="4" style="left:3px;top:1px" shape-rendering="crispEdges"><path d="M3 0h1v1h-1zM2 1h3v1h-3zM1 2h5v1h-5zM0 3h7v1h-7z" fill="#000"/></svg></div><div class="sb" style="left:30px;top:9px;width:15px;height:9px"><svg width="7" height="4" style="left:3px;top:1px" shape-rendering="crispEdges"><path d="M0 0h7v1h-7zM1 1h5v1h-5zM2 2h3v1h-3zM3 3h1v1h-1z" fill="#000"/></svg></div></div>
<div class="t " style="left:800px;top:445px;transform:scaleX(0.8646)">Number</div>
<div class="ed" style="left:844px;top:440px;width:49px;height:22px"><div class="t " style="left:2px;top:2px">8</div><div class="sb su" style="left:30px;top:2px;width:15px;height:7px"><svg width="7" height="4" style="left:3px;top:1px" shape-rendering="crispEdges"><path d="M3 0h1v1h-1zM2 1h3v1h-3zM1 2h5v1h-5zM0 3h7v1h-7z" fill="#000"/></svg></div><div class="sb" style="left:30px;top:9px;width:15px;height:9px"><svg width="7" height="4" style="left:3px;top:1px" shape-rendering="crispEdges"><path d="M0 0h7v1h-7zM1 1h5v1h-5zM2 2h3v1h-3zM3 3h1v1h-1z" fill="#000"/></svg></div></div>
<div class="t " style="left:901px;top:443px;transform:scaleX(0.8675)">Quality</div>
<div class="ed" style="left:939px;top:441px;width:42px;height:22px"><div class="t g2" style="left:2px;top:2px">0</div><div class="sb su" style="left:23px;top:2px;width:15px;height:7px"><svg width="7" height="4" style="left:3px;top:1px" shape-rendering="crispEdges"><path d="M3 0h1v1h-1zM2 1h3v1h-3zM1 2h5v1h-5zM0 3h7v1h-7z" fill="#000"/></svg></div><div class="sb" style="left:23px;top:9px;width:15px;height:9px"><svg width="7" height="4" style="left:3px;top:1px" shape-rendering="crispEdges"><path d="M0 0h7v1h-7zM1 1h5v1h-5zM2 2h3v1h-3zM3 3h1v1h-1z" fill="#000"/></svg></div></div>
<div class="t " style="left:693px;top:474px;transform:scaleX(0.9041)">Guns / turret</div>
<div class="ed" style="left:756px;top:474px;width:72px;height:21px"><div class="t " style="left:3px;top:3px;width:56.5px;overflow:hidden;transform:scaleX(0.85)">Casemate:</div><div class="sb" style="left:52px;top:1px;width:17px;height:17px"><svg width="7" height="4" style="left:4px;top:6px" shape-rendering="crispEdges"><path d="M0 0h7v1h-7zM1 1h5v1h-5zM2 2h3v1h-3zM3 3h1v1h-1z" fill="#000"/></svg></div></div>
<div class="t " style="left:837px;top:478px;transform:scaleX(0.9426)">Weight</div>
<div class="fd" style="left:879px;top:476px;width:44px;height:17px"><div class="tr " style="right:0px;top:0px">511</div></div>
<div class="cb d" style="left:692px;top:506px"></div>
<div class="t g" style="left:710px;top:505px;transform:scaleX(0.8832)">Director</div>
<div class="cb d" style="left:756px;top:506px"></div>
<div class="t g" style="left:775px;top:505px;transform:scaleX(0.9238)">DP</div>
<div class="cb d" style="left:804px;top:506px"></div>
<div class="t g" style="left:822px;top:505px;transform:scaleX(0.8925)">Autoloader</div>
<div class="gb" style="left:684px;top:549px;width:320px;height:101px"></div>
<div class="gt" style="left:692px;top:543px;width:61.3px"></div>
<div class="t" style="left:693px;top:543px;transform:scaleX(0.8778)">Tertiary guns</div>
<div class="t " style="left:694px;top:566px;transform:scaleX(0.826)">Calibre</div>
<div class="ed" style="left:740px;top:562px;width:49px;height:22px"><div class="t " style="left:2px;top:2px">3</div><div class="sb su" style="left:30px;top:2px;width:15px;height:7px"><svg width="7" height="4" style="left:3px;top:1px" shape-rendering="crispEdges"><path d="M3 0h1v1h-1zM2 1h3v1h-3zM1 2h5v1h-5zM0 3h7v1h-7z" fill="#000"/></svg></div><div class="sb" style="left:30px;top:9px;width:15px;height:9px"><svg width="7" height="4" style="left:3px;top:1px" shape-rendering="crispEdges"><path d="M0 0h7v1h-7zM1 1h5v1h-5zM2 2h3v1h-3zM3 3h1v1h-1z" fill="#000"/></svg></div></div>
<div class="t " style="left:800px;top:566px;transform:scaleX(0.8646)">Number</div>
<div class="ed" style="left:844px;top:561px;width:49px;height:22px"><div class="t " style="left:2px;top:2px">4</div><div class="sb su" style="left:30px;top:2px;width:15px;height:7px"><svg width="7" height="4" style="left:3px;top:1px" shape-rendering="crispEdges"><path d="M3 0h1v1h-1zM2 1h3v1h-3zM1 2h5v1h-5zM0 3h7v1h-7z" fill="#000"/></svg></div><div class="sb" style="left:30px;top:9px;width:15px;height:9px"><svg width="7" height="4" style="left:3px;top:1px" shape-rendering="crispEdges"><path d="M0 0h7v1h-7zM1 1h5v1h-5zM2 2h3v1h-3zM3 3h1v1h-1z" fill="#000"/></svg></div></div>
<div class="t " style="left:909px;top:565px;transform:scaleX(0.8675)">Quality</div>
<div class="ed" style="left:948px;top:562px;width:41px;height:22px"><div class="t g2" style="left:2px;top:2px">1</div><div class="sb su" style="left:22px;top:2px;width:15px;height:7px"><svg width="7" height="4" style="left:3px;top:1px" shape-rendering="crispEdges"><path d="M3 0h1v1h-1zM2 1h3v1h-3zM1 2h5v1h-5zM0 3h7v1h-7z" fill="#000"/></svg></div><div class="sb" style="left:22px;top:9px;width:15px;height:9px"><svg width="7" height="4" style="left:3px;top:1px" shape-rendering="crispEdges"><path d="M0 0h7v1h-7zM1 1h5v1h-5zM2 2h3v1h-3zM3 3h1v1h-1z" fill="#000"/></svg></div></div>
<div class="t " style="left:694px;top:595px;transform:scaleX(0.9041)">Guns / turret</div>
<div class="ed" style="left:764px;top:595px;width:72px;height:21px"><div class="t " style="left:3px;top:3px;width:56.5px;overflow:hidden;transform:scaleX(0.85)">Casemate:</div><div class="sb" style="left:52px;top:1px;width:17px;height:17px"><svg width="7" height="4" style="left:4px;top:6px" shape-rendering="crispEdges"><path d="M0 0h7v1h-7zM1 1h5v1h-5zM2 2h3v1h-3zM3 3h1v1h-1z" fill="#000"/></svg></div></div>
<div class="t " style="left:842px;top:598px;transform:scaleX(0.9426)">Weight</div>
<div class="fd" style="left:881px;top:597px;width:44px;height:17px"><div class="tr " style="right:0px;top:0px">28</div></div>
<div class="cb d" style="left:756px;top:627px"></div>
<div class="t g" style="left:774px;top:626px;transform:scaleX(0.9238)">DP</div>
<div class="cb d" style="left:804px;top:627px"></div>
<div class="t g" style="left:822px;top:626px;transform:scaleX(0.8925)">Autoloader</div>
<div class="t " style="left:841px;top:698px;transform:scaleX(0.8756)">Special systems weight</div>
<div class="fd" style="left:961px;top:698px;width:60px;height:17px"><div class="tr " style="right:0px;top:0px">0</div></div>
<div class="t " style="left:737px;top:722px;transform:scaleX(0.8826)">Picture name</div>
<div class="ed" style="left:809px;top:722px;width:161px;height:21px"><div class="t " style="left:2px;top:2px"></div></div>
<div class="bt" style="left:972px;top:722px;width:22px;height:18px"><div class="tc " style="top:1px">...</div></div>
<div class="bt" style="left:996px;top:722px;width:22px;height:18px"><div class="tc " style="top:1px"></div><svg width="10" height="10" style="left:5px;top:3px"><path d="M0.5 0.5L9.5 9.5M9.5 0.5L0.5 9.5" stroke="#000" stroke-width="1.1" fill="none"/></svg></div>
<div class="a" style="left:1010px;top:54px;width:337px;height:621px;border:1px solid;border-color:#fff #696969 #696969 #fff;box-shadow:inset -1px -1px 0 #a0a0a0"></div>
<div class="a" style="left:1010px;top:35px;width:111px;height:21px;background:#f0f0f0;border:1px solid;border-color:#fff #696969 #f0f0f0 #fff;border-bottom:none;box-shadow:inset -1px 0 0 #a0a0a0"></div>
<div class="t " style="left:1018px;top:37px;transform:scaleX(0.875)">Additional armament</div>
<div class="a" style="left:1121px;top:37px;width:133px;height:17px;background:#f0f0f0;border:1px solid;border-color:#fff #696969 #f0f0f0 #fff;border-bottom:none;box-shadow:inset -1px 0 0 #a0a0a0"></div>
<div class="t " style="left:1126px;top:39px;transform:scaleX(0.8465)">Flight installations, missiles</div>
<div class="gb" style="left:1022px;top:63px;width:312px;height:211px"></div>
<div class="gt" style="left:1030px;top:58px;width:52.4px"></div>
<div class="t" style="left:1031px;top:58px;transform:scaleX(0.9172)">Torpedoes</div>
<div class="ed" style="left:1030px;top:86px;width:297px;height:113px"><div class="hc" style="left:1px;top:1px;width:150px"><div class="t" style="left:5px;top:1px;transform:scaleX(0.8808)">Position</div></div><div class="hc" style="left:151px;top:1px;width:60px"><div class="t" style="left:5px;top:1px;transform:scaleX(0.8823)">Tubes/...</div></div><div class="hc" style="left:211px;top:1px;width:80px"><div class="t" style="left:5px;top:1px;transform:scaleX(0.9402)">Weight/mount</div></div><div class="hc" style="left:291px;top:1px;width:4px"></div><div class="t" style="left:5px;top:20px;transform:scaleX(0.8702)">6 - Port broadside (sub)</div><div class="t" style="left:157px;top:20px">1</div><div class="t" style="left:217px;top:20px">23</div><div class="t" style="left:5px;top:34px;transform:scaleX(0.8727)">7 - Starboard broadside (sub)</div><div class="t" style="left:157px;top:34px">1</div><div class="t" style="left:217px;top:34px">23</div></div>
<div class="bt" style="left:1031px;top:210px;width:72px;height:17px"><div class="tc " style="top:0px;transform:scaleX(0.9115)">Add mount</div></div>
<div class="bt" style="left:1142px;top:210px;width:73px;height:17px"><div class="tc " style="top:0px;transform:scaleX(0.8897)">Delete mount</div></div>
<div class="bt" style="left:1246px;top:210px;width:81px;height:17px"><div class="tc " style="top:0px;transform:scaleX(0.8688)">Clear mounts</div></div>
<div class="cb d" style="left:1033px;top:248px"></div>
<div class="t g" style="left:1051px;top:248px;transform:scaleX(0.8903)">Torpedo reloads (above water tubes)</div>
<div class="gb" style="left:1022px;top:292px;width:312px;height:134px"></div>
<div class="gt" style="left:1029px;top:287px;width:56.2px"></div>
<div class="t" style="left:1030px;top:287px;transform:scaleX(0.8997)">Anti Aircraft</div>
<div class="t " style="left:1032px;top:310px;transform:scaleX(0.8951)">AA positions used: 0 of 98</div>
<div class="t " style="left:1219px;top:321px;transform:scaleX(0.9426)">Weight</div>
<div class="t " style="left:1274px;top:320px;transform:scaleX(0.8552)">Cost</div>
<div class="t " style="left:1030px;top:338px;transform:scaleX(0.8928)">Light Anti Aircraft guns</div>
<div class="ed" style="left:1158px;top:335px;width:49px;height:22px"><div class="t g2" style="left:2px;top:2px">0</div><div class="sb su" style="left:30px;top:2px;width:15px;height:7px"><svg width="7" height="4" style="left:3px;top:1px" shape-rendering="crispEdges"><path d="M3 0h1v1h-1zM2 1h3v1h-3zM1 2h5v1h-5zM0 3h7v1h-7z" fill="#000"/></svg></div><div class="sb" style="left:30px;top:9px;width:15px;height:9px"><svg width="7" height="4" style="left:3px;top:1px" shape-rendering="crispEdges"><path d="M0 0h7v1h-7zM1 1h5v1h-5zM2 2h3v1h-3zM3 3h1v1h-1z" fill="#000"/></svg></div></div>
<div class="fd" style="left:1216px;top:337px;width:47px;height:17px"><div class="tr " style="right:0px;top:0px">0</div></div>
<div class="fd" style="left:1270px;top:337px;width:49px;height:17px"><div class="tr " style="right:0px;top:0px">0</div></div>
<div class="t " style="left:1030px;top:369px;transform:scaleX(0.8871)">Medium Anti Aircraft guns</div>
<div class="ed" style="left:1158px;top:365px;width:49px;height:22px"><div class="t g2" style="left:2px;top:2px">0</div><div class="sb su" style="left:30px;top:2px;width:15px;height:7px"><svg width="7" height="4" style="left:3px;top:1px" shape-rendering="crispEdges"><path d="M3 0h1v1h-1zM2 1h3v1h-3zM1 2h5v1h-5zM0 3h7v1h-7z" fill="#000"/></svg></div><div class="sb" style="left:30px;top:9px;width:15px;height:9px"><svg width="7" height="4" style="left:3px;top:1px" shape-rendering="crispEdges"><path d="M0 0h7v1h-7zM1 1h5v1h-5zM2 2h3v1h-3zM3 3h1v1h-1z" fill="#000"/></svg></div></div>
<div class="fd" style="left:1216px;top:367px;width:47px;height:17px"><div class="tr " style="right:0px;top:0px">0</div></div>
<div class="fd" style="left:1270px;top:366px;width:49px;height:17px"><div class="tr " style="right:0px;top:0px">0</div></div>
<div class="t " style="left:1030px;top:396px;transform:scaleX(0.8919)">AA directors</div>
<div class="ed" style="left:1158px;top:394px;width:49px;height:22px"><div class="t g2" style="left:2px;top:2px">0</div><div class="sb su" style="left:30px;top:2px;width:15px;height:7px"><svg width="7" height="4" style="left:3px;top:1px" shape-rendering="crispEdges"><path d="M3 0h1v1h-1zM2 1h3v1h-3zM1 2h5v1h-5zM0 3h7v1h-7z" fill="#000"/></svg></div><div class="sb" style="left:30px;top:9px;width:15px;height:9px"><svg width="7" height="4" style="left:3px;top:1px" shape-rendering="crispEdges"><path d="M0 0h7v1h-7zM1 1h5v1h-5zM2 2h3v1h-3zM3 3h1v1h-1z" fill="#000"/></svg></div></div>
<div class="fd" style="left:1216px;top:396px;width:47px;height:17px"><div class="tr " style="right:0px;top:0px">0</div></div>
<div class="fd" style="left:1270px;top:396px;width:49px;height:17px"><div class="tr " style="right:0px;top:0px">0</div></div>
<div class="gb" style="left:1022px;top:439px;width:312px;height:81px"></div>
<div class="gt" style="left:1029px;top:434px;width:62.5px"></div>
<div class="t" style="left:1030px;top:434px;transform:scaleX(0.8867)">Mine warfare</div>
<div class="t " style="left:1030px;top:456px;transform:scaleX(0.8997)">Mines</div>
<div class="t g" style="left:1063px;top:456px;transform:scaleX(0.8556)">(max 0)</div>
<div class="ed" style="left:1118px;top:453px;width:49px;height:22px"><div class="t g2" style="left:2px;top:2px">0</div><div class="sb su" style="left:30px;top:2px;width:15px;height:7px"><svg width="7" height="4" style="left:3px;top:1px" shape-rendering="crispEdges"><path d="M3 0h1v1h-1zM2 1h3v1h-3zM1 2h5v1h-5zM0 3h7v1h-7z" fill="#000"/></svg></div><div class="sb" style="left:30px;top:9px;width:15px;height:9px"><svg width="7" height="4" style="left:3px;top:1px" shape-rendering="crispEdges"><path d="M0 0h7v1h-7zM1 1h5v1h-5zM2 2h3v1h-3zM3 3h1v1h-1z" fill="#000"/></svg></div></div>
<div class="t " style="left:1032px;top:489px;transform:scaleX(0.8908)">Minesweeping gear</div>
<div class="cb" style="left:1146px;top:490px"></div>
<div class="fd" style="left:1184px;top:489px;width:60px;height:17px"><div class="tr " style="right:0px;top:0px">0</div></div>
<div class="fd" style="left:1270px;top:487px;width:49px;height:17px"><div class="tr " style="right:0px;top:0px">0</div></div>
<div class="gb" style="left:1022px;top:535px;width:312px;height:123px"></div>
<div class="gt" style="left:1029px;top:530px;width:26.1px"></div>
<div class="t" style="left:1030px;top:530px;transform:scaleX(0.9182)">ASW</div>
<div class="t " style="left:1195px;top:545px;transform:scaleX(0.9426)">Weight</div>
<div class="t " style="left:1274px;top:542px;transform:scaleX(0.8552)">Cost</div>
<div class="t " style="left:1030px;top:558px;transform:scaleX(0.8863)">K-guns</div>
<div class="ed" style="left:1118px;top:557px;width:49px;height:22px"><div class="t g2" style="left:2px;top:2px">0</div><div class="sb su" style="left:30px;top:2px;width:15px;height:7px"><svg width="7" height="4" style="left:3px;top:1px" shape-rendering="crispEdges"><path d="M3 0h1v1h-1zM2 1h3v1h-3zM1 2h5v1h-5zM0 3h7v1h-7z" fill="#000"/></svg></div><div class="sb" style="left:30px;top:9px;width:15px;height:9px"><svg width="7" height="4" style="left:3px;top:1px" shape-rendering="crispEdges"><path d="M0 0h7v1h-7zM1 1h5v1h-5zM2 2h3v1h-3zM3 3h1v1h-1z" fill="#000"/></svg></div></div>
<div class="fd" style="left:1184px;top:561px;width:60px;height:17px"><div class="tr " style="right:0px;top:0px">0</div></div>
<div class="fd" style="left:1270px;top:559px;width:49px;height:17px"><div class="tr " style="right:0px;top:0px">0</div></div>
<div class="t g" style="left:1032px;top:591px;transform:scaleX(0.8802)">Forward ASW mortar</div>
<div class="cb d" style="left:1146px;top:592px"></div>
<div class="fd" style="left:1184px;top:593px;width:60px;height:17px"><div class="tr " style="right:0px;top:0px">0</div></div>
<div class="fd" style="left:1270px;top:591px;width:49px;height:17px"><div class="tr " style="right:0px;top:0px">0</div></div>
<div class="t g" style="left:1032px;top:623px;transform:scaleX(0.8884)">Increased DC storage</div>
<div class="cb d" style="left:1146px;top:624px"></div>
<div class="fd" style="left:1184px;top:625px;width:60px;height:17px"><div class="tr " style="right:0px;top:0px">0</div></div>
<div class="fd" style="left:1270px;top:623px;width:49px;height:17px"><div class="tr " style="right:0px;top:0px">0</div></div>
</div></body></html>
